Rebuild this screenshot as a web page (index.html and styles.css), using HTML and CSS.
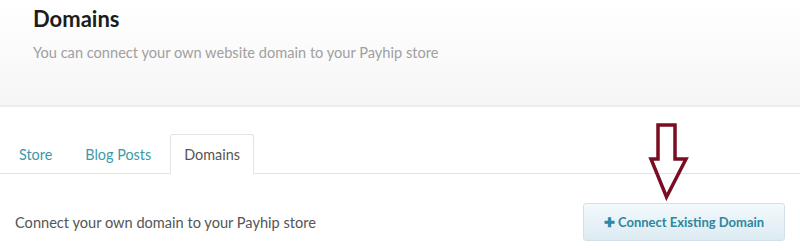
FILE: index.html
```html
<!DOCTYPE html>
<html lang="en">
<head>
    <meta charset="UTF-8">
    <title>Domains</title>
    <link rel="stylesheet" href="styles.css">
</head>
<body>
    <div class="page-header">
        <h1>Domains</h1>
        <p class="subtitle">You can connect your own website domain to your Payhip store</p>
    </div>

    <div class="tabs">
        <a class="tab" href="#">Store</a>
        <a class="tab" href="#">Blog Posts</a>
        <a class="tab active" href="#">Domains</a>
    </div>

    <div class="content">
        <span class="lead">Connect your own domain to your Payhip store</span>
        <button class="connect-button"><span class="plus">&#10010;</span> Connect Existing Domain</button>
    </div>

    <!-- annotation arrow drawn over the screenshot -->
    <svg class="arrow" width="42" height="78" viewBox="0 0 42 78">
        <path d="M10 2 H27 V36 H38 L18.5 74 L3 36 H10 Z" fill="none" stroke="#7b0d22" stroke-width="3.5" stroke-linejoin="miter"/>
    </svg>
</body>
</html>
```

FILE: styles.css
```css
body {
    margin: 0;
    font-family: Lato, "Open Sans", Arial, sans-serif;
    background-color: #ffffff;
    color: #555;
    position: relative;
    width: 800px;
    height: 250px;
    overflow: hidden;
}

.page-header {
    height: 107px;
    padding: 4px 33px 0;
    box-sizing: border-box;
    background: linear-gradient(180deg, #ffffff, #f6f6f6);
    border-bottom: 2px solid #ececec;
}

.page-header h1 {
    margin: 0;
    font-size: 22px;
    font-weight: 700;
    color: #1c1c1c;
    line-height: 30px;
}

.subtitle {
    margin: 10px 0 0;
    font-size: 14.6px;
    color: #a0a0a0;
}

.tabs {
    display: flex;
    margin-top: 27px;
    padding-left: 3px;
    border-bottom: 1px solid #e3e3e3;
    height: 39px;
}

.tab {
    padding: 0 15px;
    line-height: 40px;
    font-size: 14.4px;
    color: #3a9aab;
    text-decoration: none;
    border: 1px solid transparent;
    border-bottom: none;
    border-radius: 3px 3px 0 0;
}

.tab + .tab {
    margin-left: 1px;
}

.tab.active {
    color: #555;
    background-color: #ffffff;
    border-color: #e3e3e3;
    height: 40px;
    margin-left: 3px;
    padding: 0 13px;
    box-sizing: border-box;
}

.content {
    display: flex;
    justify-content: space-between;
    align-items: center;
    padding: 29px 15px 0 15px;
}

.lead {
    font-size: 14.6px;
    color: #555;
}

.connect-button {
    width: 202px;
    height: 38px;
    border: 1px solid #d3e2ea;
    border-radius: 3px;
    background: linear-gradient(180deg, #f3f9fc, #dcebf2);
    color: #2f86a0;
    font-family: inherit;
    font-size: 13px;
    font-weight: 700;
    cursor: pointer;
}

.plus {
    font-size: 12.5px;
    color: #2c8aa6;
}

.arrow {
    position: absolute;
    left: 648px;
    top: 123px;
}
```
